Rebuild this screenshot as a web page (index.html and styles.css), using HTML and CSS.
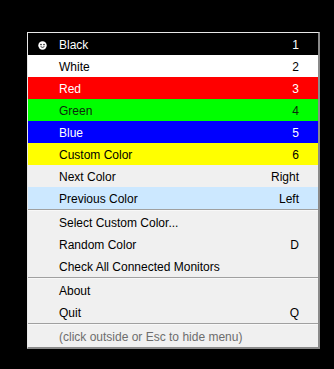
FILE: index.html
```html
<!DOCTYPE html>
<html lang="en">
<head>
  <meta charset="UTF-8" />
  <title>Color Menu</title>
  <link rel="stylesheet" href="styles.css">
</head>
<body>

  <!-- Popup menu -->
  <div class="menu">
    <div class="item black">
      <span class="mark">
        <svg width="9" height="9" viewBox="0 0 9 9">
          <circle cx="4.5" cy="4.5" r="4.2" fill="#fff"/>
          <circle cx="3" cy="3.6" r="0.8" fill="#222"/>
          <circle cx="6" cy="3.6" r="0.8" fill="#222"/>
          <path d="M2.6 5.6 Q4.5 7.2 6.4 5.6" stroke="#222" stroke-width="0.9" fill="none"/>
        </svg>
      </span>
      <span class="label">Black</span><span class="key">1</span>
    </div>
    <div class="item white"><span class="mark"></span><span class="label">White</span><span class="key">2</span></div>
    <div class="item red"><span class="mark"></span><span class="label">Red</span><span class="key">3</span></div>
    <div class="item green"><span class="mark"></span><span class="label">Green</span><span class="key">4</span></div>
    <div class="item blue"><span class="mark"></span><span class="label">Blue</span><span class="key">5</span></div>
    <div class="item yellow"><span class="mark"></span><span class="label">Custom Color</span><span class="key">6</span></div>
    <div class="item"><span class="mark"></span><span class="label">Next Color</span><span class="key">Right</span></div>
    <div class="item hover"><span class="mark"></span><span class="label">Previous Color</span><span class="key">Left</span></div>

    <div class="sep"></div>

    <div class="item"><span class="mark"></span><span class="label">Select Custom Color...</span><span class="key"></span></div>
    <div class="item"><span class="mark"></span><span class="label">Random Color</span><span class="key">D</span></div>
    <div class="item"><span class="mark"></span><span class="label">Check All Connected Monitors</span><span class="key"></span></div>

    <div class="sep"></div>

    <div class="item"><span class="mark"></span><span class="label">About</span><span class="key"></span></div>
    <div class="item"><span class="mark"></span><span class="label">Quit</span><span class="key">Q</span></div>

    <div class="sep"></div>

    <div class="item hint"><span class="mark"></span><span class="label">(click outside or Esc to hide menu)</span></div>
  </div>

</body>
</html>
```

FILE: styles.css
```css
body {
  margin: 0;
  background: #000;
  font-family: "Liberation Sans", Arial, sans-serif;
  font-size: 12px;
}

.menu {
  margin: 32px 0 0 27px;
  width: 290px;
  background: #f0f0f0;
  border-top: 1px solid #e8e8e8;
  border-left: 1px solid #e8e8e8;
  border-right: 2px solid #8a8a8a;
  border-bottom: 2px solid #8a8a8a;
}

.item {
  display: flex;
  align-items: center;
  height: 22px;
  box-sizing: border-box;
  padding-top: 2px;
  padding-right: 19px;
  color: #000;
}

.mark {
  width: 31px;
  display: flex;
  justify-content: center;
  padding-right: 2px;
  box-sizing: border-box;
}

.label {
  flex: 1;
}

.key {
  text-align: right;
}

.black { background: #000; color: #fff; }
.white { background: #fff; }
.red { background: #ff0000; color: #fff; }
.green { background: #00ff00; color: #0c2a0c; }
.blue { background: #0000ff; color: #fff; }
.yellow { background: #ffff00; }
.hover { background: #cce8ff; }

.sep {
  height: 1px;
  background: #a0a0a0;
  border-bottom: 1px solid #f8f8f8;
}

.hint {
  color: #6d6d6d;
}
```
